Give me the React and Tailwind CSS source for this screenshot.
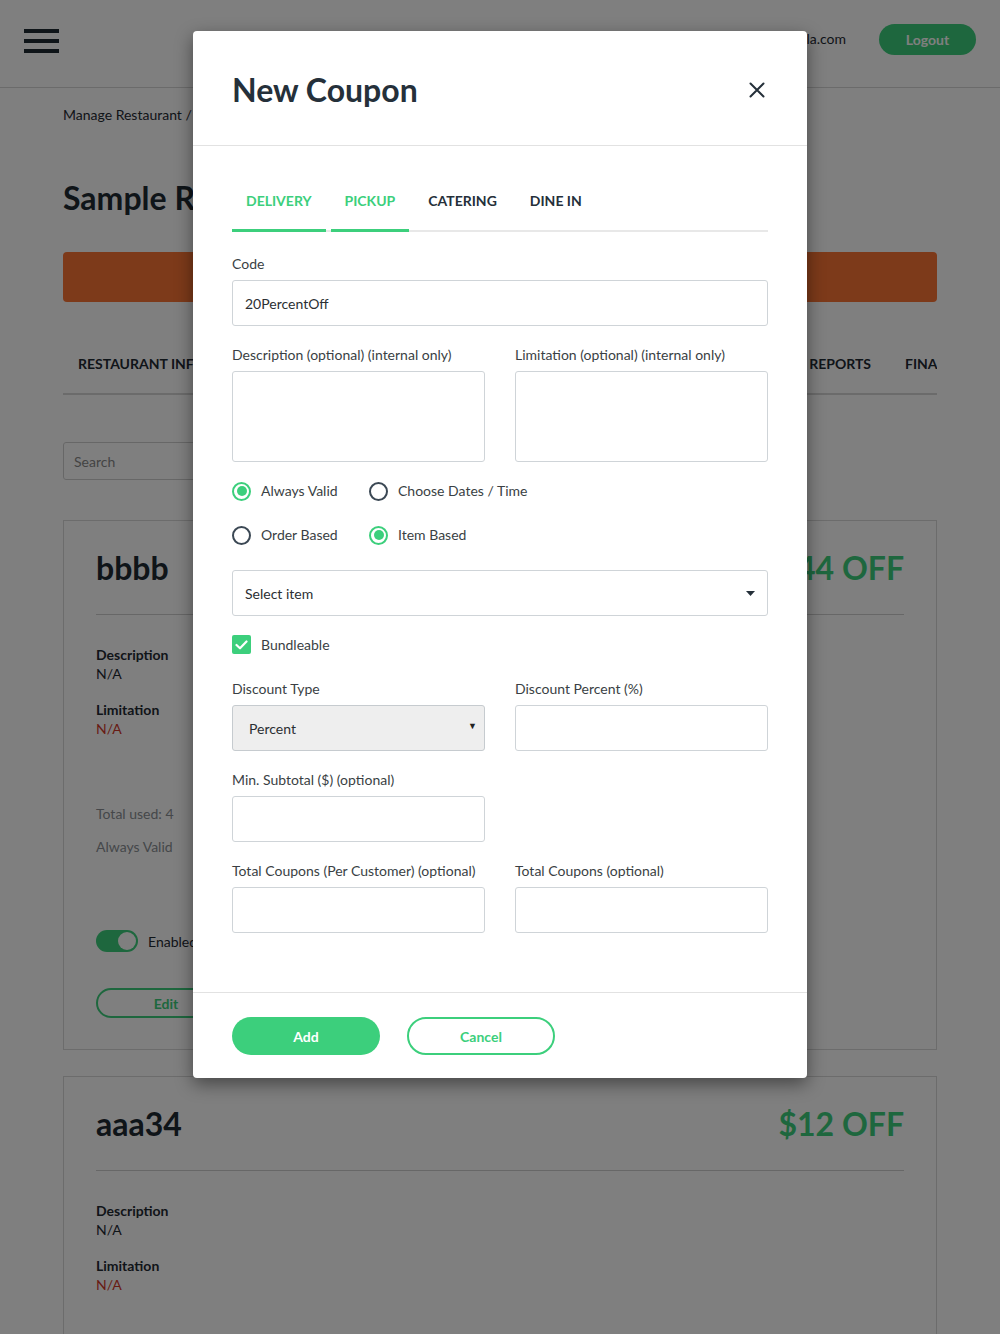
import React from "react";

function Radio({ checked, label, w }) {
  return (
    <div className={`flex items-center ${w || ""}`}>
      {checked ? (
        <span className="w-[19px] h-[19px] rounded-full border-2 border-[#3ccf7c] flex items-center justify-center">
          <span className="w-[10px] h-[10px] rounded-full bg-[#3ccf7c]" />
        </span>
      ) : (
        <span className="w-[19px] h-[19px] rounded-full border-2 border-[#3b4854]" />
      )}
      <span className="ml-[10px] text-[14px] leading-5 text-[#3a3f44]">{label}</span>
    </div>
  );
}

function Field({ label, children }) {
  return (
    <div className="flex flex-col">
      <label className="text-[14px] leading-5 text-[#3a3f44]">{label}</label>
      <div className="mt-[6px]">{children}</div>
    </div>
  );
}

function Input({ value, h = "h-[46px]" }) {
  return (
    <div className={`${h} w-full border border-[#cfd4d8] rounded-[3px] bg-white flex items-center px-[12px] text-[14px] text-[#2b2f33]`}>
      {value}
    </div>
  );
}

function BgCard({ title, amount, extra }) {
  return (
    <div className="border border-[#d9d9d9] px-[32px] pt-[26px] pb-[31px]">
      <div className="flex items-center justify-between h-[42px]">
        <span className="text-[32px] font-bold text-[#1f2a33] leading-none">{title}</span>
        <span className="text-[32px] font-bold text-[#3ccf7c] leading-none">{amount}</span>
      </div>
      <div className="h-px bg-[#cfcfcf] mt-[25px]" />
      <div className="mt-[30px] text-[14px] leading-[19px]">
        <div className="font-bold text-[#1f2a33]">Description</div>
        <div className="text-[#1f2a33]">N/A</div>
        <div className="font-bold text-[#1f2a33] mt-[17px]">Limitation</div>
        <div className="text-[#d0392b]">N/A</div>
      </div>
      {extra}
    </div>
  );
}

export default function App() {
  return (
    <div className="relative w-[1000px] h-[1334px] overflow-hidden bg-white font-['Lato','Noto_Sans',sans-serif] text-[#1f2a33]">
      {/* Page header */}
      <header className="h-[88px] border-b border-[#d6d6d6] flex items-center justify-between pl-[24px] pr-[24px]">
        <div className="flex flex-col gap-[6px] w-[35px] -mt-[6px]">
          <span className="h-[4px] bg-[#1f2a33]" />
          <span className="h-[4px] bg-[#1f2a33]" />
          <span className="h-[4px] bg-[#1f2a33]" />
        </div>
        <div className="flex items-center -mt-[8px]">
          <span className="text-[14px] text-[#1f2a33] -mt-[3px]">owner@samplepizzeria-demo-nola.com</span>
          <button className="ml-[33px] w-[97px] h-[31px] rounded-full bg-[#3ccf7c] text-white text-[14px] font-bold">Logout</button>
        </div>
      </header>

      <main className="px-[63px]">
        <div className="mt-[17px] text-[14px] leading-5 text-[#1f2a33]">Manage Restaurant / Sample Restaurant / Coupons</div>
        <h1 className="mt-[57px] text-[32px] font-bold leading-[32px]">Sample Restaurant</h1>
        <div className="mt-[38px] h-[50px] rounded-[4px] bg-[#fa7434]" />
        <div className="mt-[51px] h-[42px] border-b-2 border-[#d6d6d6] flex overflow-hidden text-[14px] font-bold uppercase">
          <span className="pl-[15px] pr-[15px]">Restaurant Info</span>
          <span className="px-[15px]">Menu</span>
          <span className="px-[15px]">Hours</span>
          <div className="ml-auto flex">
            <span className="pl-[15px] pr-[19px]">Reports</span>
            <span className="w-[47px] pl-[15px] overflow-hidden whitespace-nowrap">Finance</span>
          </div>
        </div>
        <div className="mt-[47px] w-[320px] h-[38px] border border-[#cfcfcf] rounded-[3px] flex items-center px-[10px] text-[14px] text-[#888]">Search</div>
        <div className="mt-[40px] flex flex-col">
          <BgCard
            title="bbbb"
            amount="$44 OFF"
            extra={
              <div>
                <div className="mt-[66px] text-[14px] leading-[19px] text-[#8a8f94]">Total used: 4</div>
                <div className="mt-[14px] text-[14px] leading-[19px] text-[#8a8f94]">Always Valid</div>
                <div className="mt-[74px] flex items-center">
                  <span className="w-[42px] h-[22px] rounded-full bg-[#3ccf7c] flex items-center justify-end pr-[2px]">
                    <span className="w-[18px] h-[18px] rounded-full bg-white" />
                  </span>
                  <span className="ml-[10px] text-[14px]">Enabled</span>
                </div>
                <div className="mt-[36px] w-[140px] h-[30px] rounded-full border-2 border-[#3ccf7c] flex items-center justify-center text-[14px] font-bold text-[#3ccf7c]">Edit</div>
              </div>
            }
          />
          <div className="mt-[26px]">
            <BgCard title="aaa34" amount="$12 OFF" extra={<div className="h-[40px]" />} />
          </div>
        </div>
      </main>

      {/* Overlay */}
      <div className="absolute inset-0 bg-black/50" />

      {/* Modal */}
      <div className="absolute left-[193px] top-[31px] w-[614px] bg-white rounded-[4px] shadow-[0_6px_18px_rgba(0,0,0,0.45)]">
        <div className="h-[115px] border-b border-[#e2e2e2] flex items-center justify-between pl-[39px] pr-[42px]">
          <h2 className="text-[32px] font-bold text-[#25303a] leading-none mt-[3px]">New Coupon</h2>
          <svg width="16" height="16" viewBox="0 0 16 16" className="mt-[4px]">
            <path d="M1.5 1.5 L14.5 14.5 M14.5 1.5 L1.5 14.5" stroke="#25303a" strokeWidth="2" strokeLinecap="round" />
          </svg>
        </div>

        <div className="px-[39px] pt-[45px] pb-[59px]">
          <div className="flex gap-[5px] border-b-2 border-[#e8e8e8] text-[14px] font-bold">
            <span className="px-[14px] pb-[18px] leading-5 -mb-[2px] border-b-[3px] border-[#3ccf7c] text-[#3ccf7c]">DELIVERY</span>
            <span className="px-[14px] pb-[18px] leading-5 -mb-[2px] border-b-[3px] border-[#3ccf7c] text-[#3ccf7c]">PICKUP</span>
            <span className="px-[14px] pb-[18px] leading-5 text-[#25303a]">CATERING</span>
            <span className="px-[14px] pb-[18px] leading-5 text-[#25303a]">DINE IN</span>
          </div>

          <div className="mt-[22px]">
            <Field label="Code">
              <Input value="20PercentOff" />
            </Field>
          </div>

          <div className="mt-[19px] grid grid-cols-2 gap-x-[30px]">
            <Field label="Description (optional) (internal only)">
              <Input h="h-[91px]" />
            </Field>
            <Field label="Limitation (optional) (internal only)">
              <Input h="h-[91px]" />
            </Field>
          </div>

          <div className="mt-[19px] flex">
            <Radio checked label="Always Valid" w="w-[137px]" />
            <Radio label="Choose Dates / Time" />
          </div>
          <div className="mt-[24px] flex">
            <Radio label="Order Based" w="w-[137px]" />
            <Radio checked label="Item Based" />
          </div>

          <div className="mt-[25px] h-[46px] border border-[#cfd4d8] rounded-[3px] flex items-center justify-between pl-[12px] pr-[12px] text-[14px] text-[#2b2f33]">
            <span>Select item</span>
            <svg width="9" height="5" viewBox="0 0 9 5"><path d="M0 0 H9 L4.5 5 Z" fill="#25303a" /></svg>
          </div>

          <div className="mt-[18px] flex items-center">
            <span className="w-[19px] h-[19px] rounded-[2px] bg-[#3ccf7c] flex items-center justify-center">
              <svg width="13" height="10" viewBox="0 0 13 10"><path d="M1.5 5 L5 8.3 L11.5 1.5" stroke="white" strokeWidth="2.2" fill="none" strokeLinecap="round" strokeLinejoin="round" /></svg>
            </span>
            <span className="ml-[10px] text-[14px] text-[#3a3f44]">Bundleable</span>
          </div>

          <div className="mt-[24px] grid grid-cols-2 gap-x-[30px]">
            <Field label="Discount Type">
              <div className="h-[46px] border border-[#c6cbcf] rounded-[3px] bg-[#eeeeee] flex items-center justify-between pl-[16px] pr-[7px] text-[14px] text-[#2b2f33]">
                <span>Percent</span>
                <span className="text-[9px] text-[#222] -mt-[4px]">▼</span>
              </div>
            </Field>
            <Field label="Discount Percent (%)">
              <Input />
            </Field>
          </div>

          <div className="mt-[19px] grid grid-cols-2 gap-x-[30px]">
            <Field label="Min. Subtotal ($) (optional)">
              <Input />
            </Field>
          </div>

          <div className="mt-[19px] grid grid-cols-2 gap-x-[30px]">
            <Field label="Total Coupons (Per Customer) (optional)">
              <Input />
            </Field>
            <Field label="Total Coupons (optional)">
              <Input />
            </Field>
          </div>
        </div>

        <div className="border-t border-[#e2e2e2] px-[39px] pt-[24px] pb-[23px] flex gap-[27px]">
          <button className="w-[148px] h-[38px] rounded-full bg-[#3ccf7c] text-white text-[14px] font-bold">Add</button>
          <button className="w-[148px] h-[38px] rounded-full border-2 border-[#3ccf7c] text-[#3ccf7c] text-[14px] font-bold">Cancel</button>
        </div>
      </div>
    </div>
  );
}
